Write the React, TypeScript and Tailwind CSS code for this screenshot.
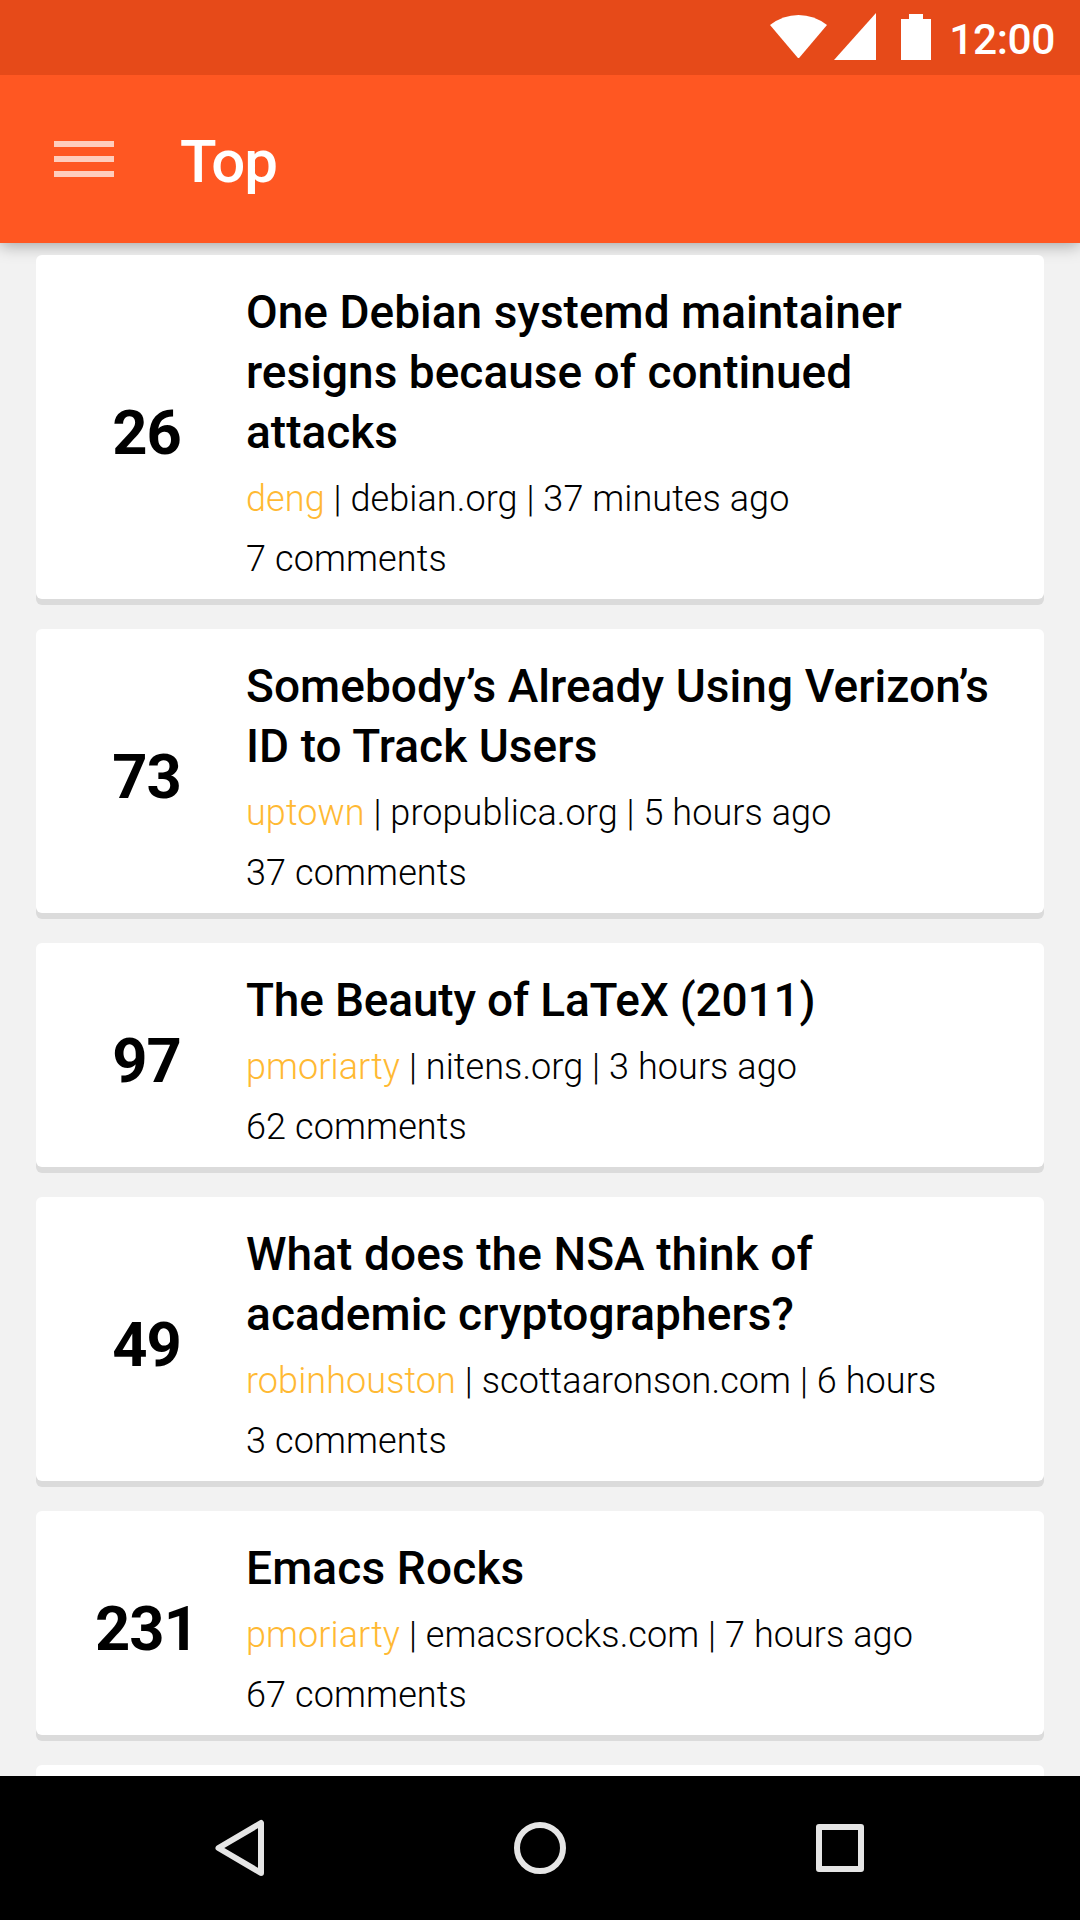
const items = [
  { n: '26', spacing: 'tracking-[0.02px]', title: ['One Debian systemd maintainer', 'resigns because of continued', 'attacks'], user: 'deng', rest: 'debian.org | 37 minutes ago', c: '7 comments' },
  { n: '73', spacing: 'tracking-[0.07px]', title: ['Somebody’s Already Using Verizon’s', 'ID to Track Users'], user: 'uptown', rest: 'propublica.org | 5 hours ago', c: '37 comments' },
  { n: '97', spacing: 'tracking-[-0.18px]', title: ['The Beauty of LaTeX (2011)'], user: 'pmoriarty', rest: 'nitens.org | 3 hours ago', c: '62 comments' },
  { n: '49', spacing: 'tracking-[0.08px]', title: ['What does the NSA think of', 'academic cryptographers?'], user: 'robinhouston', rest: 'scottaaronson.com | 6 hours', c: '3 comments' },
  { n: '231', spacing: 'tracking-[0.15px]', title: ['Emacs Rocks'], user: 'pmoriarty', rest: 'emacsrocks.com | 7 hours ago', c: '67 comments' },
];

export default function App() {
  return (
    <div className="flex h-[1920px] w-[1080px] flex-col overflow-hidden bg-[#f2f2f2] font-['Roboto',sans-serif] text-black">
      <div className="relative z-10 flex h-[75px] shrink-0 items-center justify-end bg-[#e64a19] pr-[25px] text-white">
        <svg width="170" height="75" viewBox="0 0 170 75" fill="#fff">
          <path d="M5 25Q18 15 33.500 15Q49 15 62 25L34.500 57.500Q33.500 58.500 32.500 57.500Z" />
          <path d="M111 13V60H69Z" />
          <path d="M136 19h8v-5h14v5h8v41h-30z" />
        </svg>
        <span className="w-[120px] pt-[4px] text-right text-[42.5px] font-medium leading-[71px] tracking-[-0.4px]">12:00</span>
      </div>
      <header className="flex h-[168px] shrink-0 items-center bg-[#ff5722] pl-[54px] text-white shadow-[0_2px_16px_rgba(0,0,0,0.35)]">
        <div className="flex w-[60px] flex-col gap-[9px] opacity-70">
          <i className="h-[6px] bg-white" />
          <i className="h-[6px] bg-white" />
          <i className="h-[6px] bg-white" />
        </div>
        <h1 className="ml-[66px] pt-[5px] text-[60px] font-medium leading-[70px] tracking-[-1.2px]">Top</h1>
      </header>
      <main className="relative flex min-h-0 flex-1 flex-col gap-[30px] overflow-hidden px-[36px] pt-[12px]">
        {items.map((it) => (
          <article key={it.n} className="flex shrink-0 items-center rounded-[6px] bg-white pb-[10px] pt-[27px] shadow-[0_6px_0_#dbdbdb]">
            <div className="mb-[5px] w-[210px] pl-[11px] text-center text-[61.5px] font-bold leading-[60px] tracking-[-1px]">{it.n}</div>
            <div className="whitespace-nowrap">
              <div className={it.spacing}>
                {it.title.map((t) => (
                  <h2 key={t} className="text-[46px] font-medium leading-[60px]">{t}</h2>
                ))}
              </div>
              <p className="mt-[7px] text-[36px] font-light leading-[60px] tracking-[0.08px]">
                <span className="text-[#ffb933]">{it.user}</span> | {it.rest}
              </p>
              <p className="text-[36px] font-light leading-[60px] tracking-[0.12px]">{it.c}</p>
            </div>
          </article>
        ))}
        <div className="h-[100px] shrink-0 rounded-[6px] bg-white" />
      </main>
      <nav className="flex h-[144px] shrink-0 items-center justify-center bg-black">
        <svg width="1080" height="144" viewBox="0 0 1080 144" fill="none" stroke="#e5e5e5" strokeWidth="6" strokeLinejoin="round">
          <path d="M218.500 72L261 47V97Z" />
          <circle cx="540" cy="72" r="23" />
          <path d="M819 51h42v42h-42z" />
        </svg>
      </nav>
    </div>
  );
}
